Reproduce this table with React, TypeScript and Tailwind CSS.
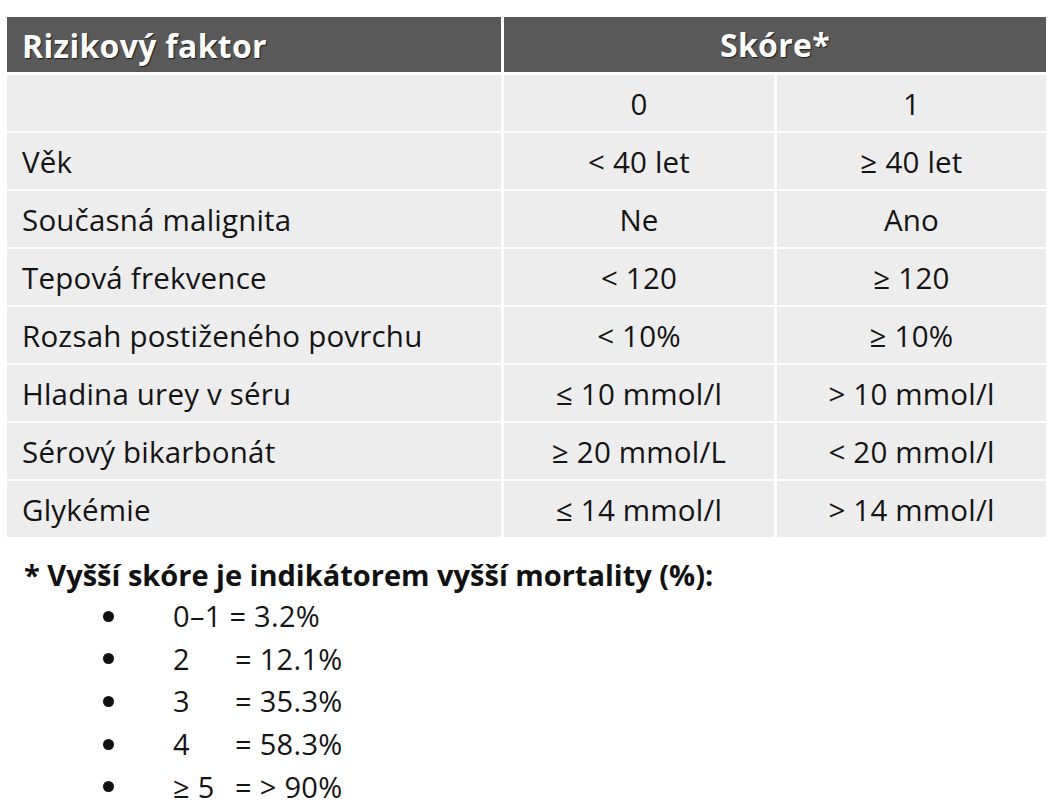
const rows = [
  { faktor: "", a: "0", b: "1" },
  { faktor: "Věk", a: "< 40 let", b: "≥ 40 let" },
  { faktor: "Současná malignita", a: "Ne", b: "Ano" },
  { faktor: "Tepová frekvence", a: "< 120", b: "≥ 120" },
  { faktor: "Rozsah postiženého povrchu", a: "< 10%", b: "≥ 10%" },
  { faktor: "Hladina urey v séru", a: "≤ 10 mmol/l", b: "> 10 mmol/l" },
  { faktor: "Sérový bikarbonát", a: "≥ 20 mmol/L", b: "< 20 mmol/l" },
  { faktor: "Glykémie", a: "≤ 14 mmol/l", b: "> 14 mmol/l" },
];

const mortality = [
  { skore: "", value: "0–1 = 3.2%" },
  { skore: "2", value: "= 12.1%" },
  { skore: "3", value: "= 35.3%" },
  { skore: "4", value: "= 58.3%" },
  { skore: "≥ 5", value: "= > 90%" },
];

export default function App() {
  return (
    <div className="w-[1048px] h-[800px] overflow-hidden bg-white text-[#141414] font-['Open_Sans',sans-serif] pt-[17px] pl-[7px]">
      <div className="grid grid-cols-[494px_270px_269px] gap-x-[3px] gap-y-[2px] w-[1039px]">
        {/* hlavicka */}
        <div className="h-[55px] mb-[1px] bg-[#595959] text-white font-bold text-[32px] tracking-[0.3px] flex items-center pl-[15px] pt-[3px] [text-shadow:1px_1px_1px_rgba(0,0,0,0.7)]">
          Rizikový faktor
        </div>
        <div className="col-span-2 h-[55px] mb-[1px] bg-[#595959] text-white font-bold text-[32px] tracking-[0.3px] flex items-center justify-center pt-[1px] [text-shadow:1px_1px_1px_rgba(0,0,0,0.7)]">
          Skóre*
        </div>

        {rows.map((r, i) => (
          <div key={i} className="contents">
            <div className="h-[56px] bg-[#ededed] flex items-center pl-[15px] pt-[2px] text-[29.5px] tracking-[0.2px]">
              {r.faktor}
            </div>
            <div className="h-[56px] bg-[#ededed] flex items-center justify-center pt-[2px] text-[29.5px] tracking-[0.2px]">
              {r.a}
            </div>
            <div className="h-[56px] bg-[#ededed] flex items-center justify-center pt-[2px] text-[29.5px] tracking-[0.2px]">
              {r.b}
            </div>
          </div>
        ))}
      </div>

      <div className="mt-[16px] pl-[17px]">
        <p className="font-bold text-[29px] leading-[44px] text-[#111]">
          * Vyšší skóre je indikátorem vyšší mortality (%):
        </p>
        <ul className="mt-[-2px]">
          {mortality.map((m, i) => (
            <li key={i} className="flex items-center h-[42.6px] text-[29px] leading-[26px] tracking-[0.3px]">
              <span className="w-[11px] h-[11px] rounded-full bg-[#111] ml-[79px] mr-[59px]" />
              {m.skore === "" ? (
                <span>{m.value}</span>
              ) : (
                <>
                  <span className="w-[62px]">{m.skore}</span>
                  <span>{m.value}</span>
                </>
              )}
            </li>
          ))}
        </ul>
      </div>
    </div>
  );
}
